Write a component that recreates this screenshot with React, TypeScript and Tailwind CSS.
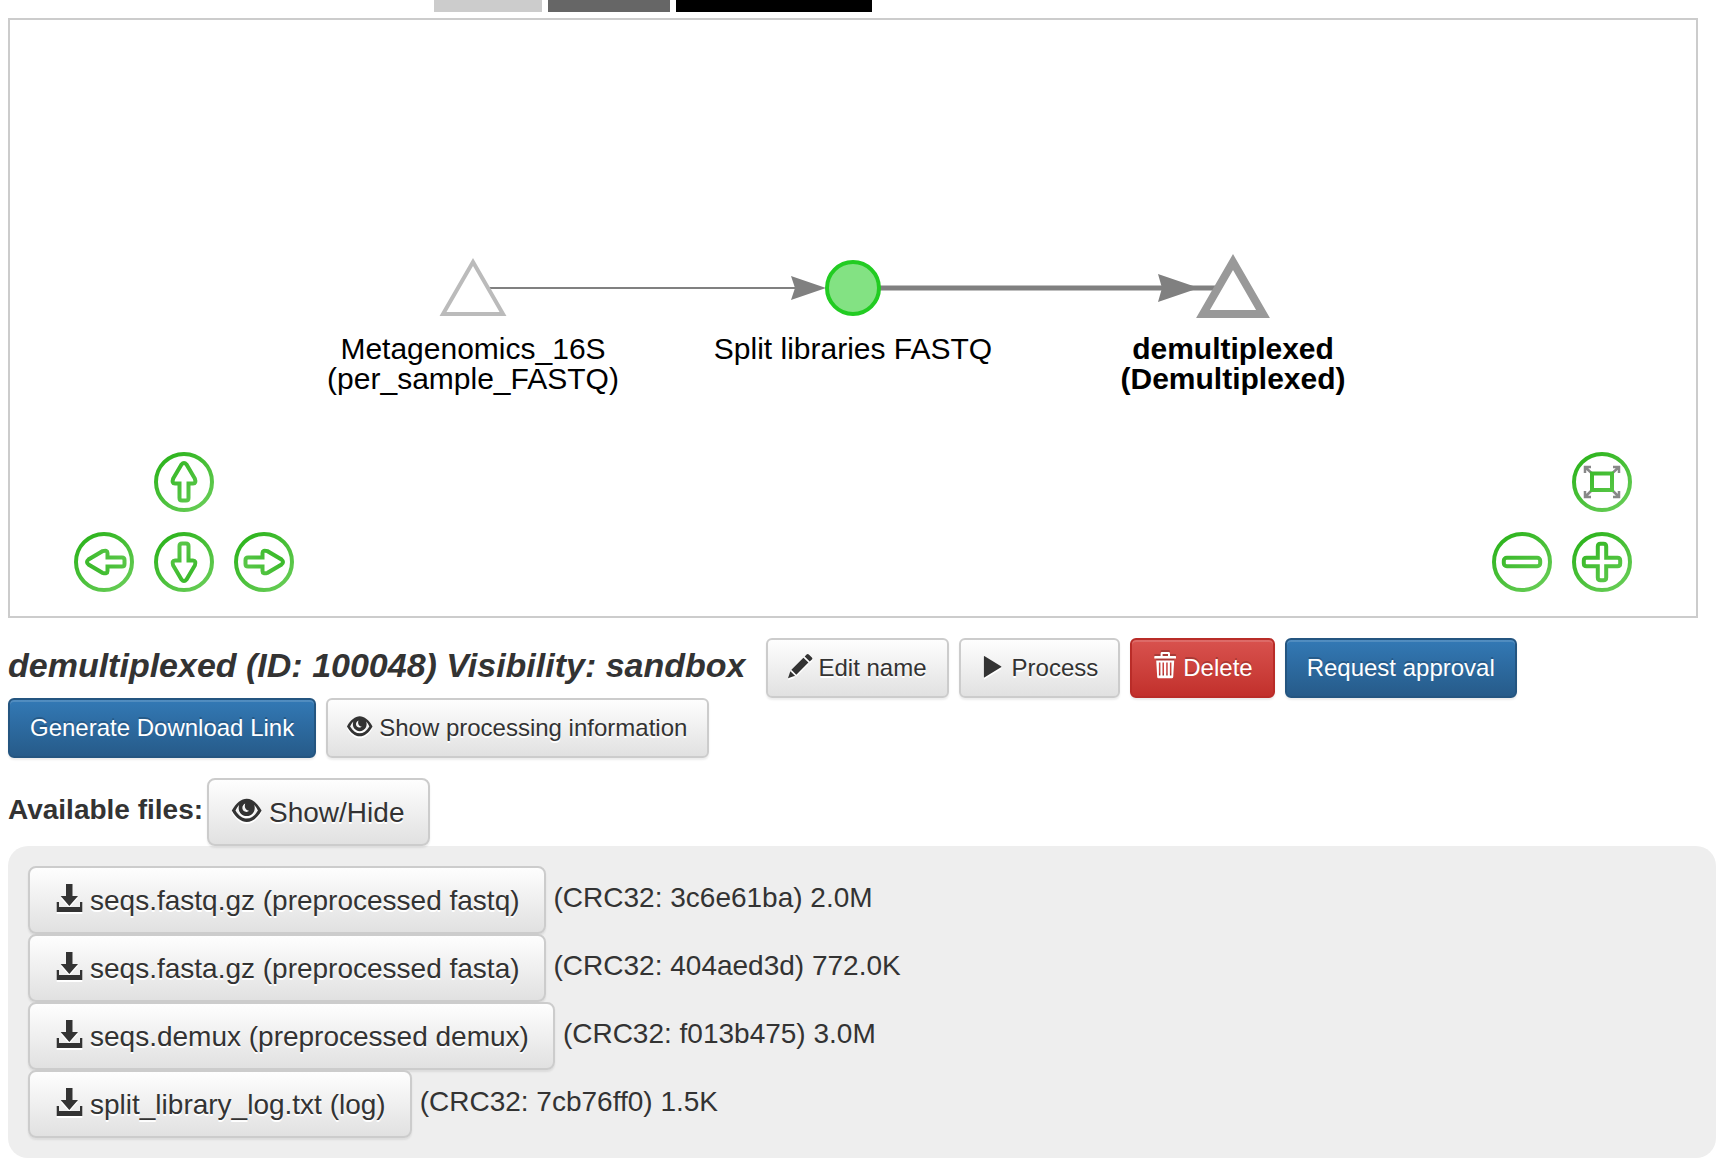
import type { ReactNode } from "react";

const GREEN = "url(#control-green)";

function Glyph({ size, shadow, box = 28, children }: { size: string; shadow: string; box?: number; children: ReactNode }) {
  return (
    <svg
      viewBox={`0 0 ${box} ${box}`}
      className={`${size} ${shadow} mb-1 shrink-0 overflow-visible`}
      fill="currentColor"
      aria-hidden="true"
    >
      {children}
    </svg>
  );
}

const LIGHT = "drop-shadow-[0_2px_0_#fff]";
const DARK = "drop-shadow-[0_-2px_0_rgba(0,0,0,0.2)]";

function Eye({ size }: { size: string }) {
  return (
    <Glyph size={size} shadow={LIGHT}>
      <path
        fillRule="evenodd"
        d="M-1.2 14.500C3 7 8.500 2.700 13.700 2.700S24.500 7 28.600 14.500C24.500 22 19 26 13.700 26S3 22 -1.200 14.500ZM6.200 8.800C4.700 10.500 3.500 12.400 2.500 14.500C5.700 20 9.500 22.600 13.700 22.600S21.700 20 24.900 14.500C23.900 12.400 22.700 10.500 21.200 8.800C23.200 14.500 19.500 20 13.700 20S4.200 14.500 6.200 8.800ZM12.200 7.600C8.700 9.500 8.300 14 11.900 15.600C13.400 16.200 15.200 15.800 15.900 14.700C12.900 14.500 10.900 11.500 12.200 7.600Z"
      />
    </Glyph>
  );
}

function Download() {
  return (
    <Glyph size="size-7" shadow={LIGHT}>
      <path d="M12 0H18.500V12H24L15.300 22L6.700 12H12ZM2.700 18H5V23H26V18H28.300V28H2.700Z" />
    </Glyph>
  );
}

function Pencil() {
  return (
    <Glyph size="size-6" shadow={LIGHT} box={24}>
      <path d="M0 24.300L2.300 17.200L7 21.800ZM3.400 15.700L15.400 3.700L20.400 8.600L8.300 20.700ZM16.700 2.400L18.600 .5Q19.700 -.6 20.800 .5L23.900 3.400Q25 4.500 23.900 5.600L21.700 7.400Z" />
    </Glyph>
  );
}

function Play() {
  return (
    <Glyph size="size-6" shadow={LIGHT} box={24}>
      <path d="M2.900 2.700Q2.900 1.800 3.700 2.300L20 12.200Q20.800 12.700 20 13.300L3.700 23.300Q2.900 23.800 2.900 22.900Z" />
    </Glyph>
  );
}

function Trash() {
  return (
    <Glyph size="size-6" shadow={DARK} box={24}>
      <path
        fillRule="evenodd"
        d="M2.300 4.500V2.600Q2.300 2 3 2H8.600V-.6Q8.600 -2 10 -2H16.600Q18 -2 18 -.6V2H23.300Q24 2 24 2.600V4.500ZM10.600 0V2H16V0ZM4.200 6.500H22.200L21.200 23Q21.100 24.200 19.900 24.200H6.500Q5.300 24.200 5.200 23ZM6.900 8.500V21.500H8.400V8.500ZM10.500 8.500V21.500H12V8.500ZM14.200 8.500V21.500H15.700V8.500ZM17.900 8.500V21.500H19.400V8.500Z"
      />
    </Glyph>
  );
}

const BASE =
  "inline-flex cursor-pointer items-center whitespace-nowrap border-2 bg-linear-to-b bg-origin-border shadow-[inset_0_2px_0_rgba(255,255,255,0.15),0_2px_2px_rgba(0,0,0,0.075)]";
const TONES = {
  plain: "border-[#ccc] from-white to-[#e0e0e0] text-[#333] text-shadow-[0_2px_0_#fff]",
  primary: "border-[#245580] from-[#337ab7] to-[#265a88] text-white text-shadow-[0_-2px_0_rgba(0,0,0,0.2)]",
  danger: "border-[#b92c28] from-[#d9534f] to-[#c12e2a] text-white text-shadow-[0_-2px_0_rgba(0,0,0,0.2)]",
};
const SIZES = {
  sm: "h-15 gap-[7px] rounded-md px-5 text-[24px]",
  md: "h-17 gap-2 rounded-lg px-6 text-[28px] [&>span]:pt-0.5",
};

function Button({
  tone = "plain",
  size = "sm",
  icon,
  children,
}: {
  tone?: keyof typeof TONES;
  size?: keyof typeof SIZES;
  icon?: ReactNode;
  children: ReactNode;
}) {
  return (
    <button type="button" className={`${BASE} ${TONES[tone]} ${SIZES[size]}`}>
      {icon}
      <span>{children}</span>
    </button>
  );
}

const ARROW =
  "M27.500 12.500Q30 9.500 32.500 12.500L40.800 26.500Q42.500 31.500 39 31.500H34.500V46Q34.500 48.500 32 48.500H28Q25.500 48.500 25.500 46V31.500H21Q17.500 31.500 19.200 26.500Z";

function Control({ label, className = "", children }: { label: string; className?: string; children: ReactNode }) {
  return (
    <button type="button" aria-label={label} className={`size-15 cursor-pointer rounded-full ${className}`}>
      <svg viewBox="0 0 60 60" className="size-15" fill="none" stroke={GREEN} strokeWidth="4" aria-hidden="true">
        <circle cx="30" cy="30" r="28" />
        {children}
      </svg>
    </button>
  );
}

function Workflow() {
  return (
    <svg
      viewBox="0 0 1686 596"
      className="h-[596px] w-full font-['Liberation_Sans',Arial,sans-serif] text-[30px]"
      role="img"
      aria-label="Processing workflow"
    >
      <defs>
        <linearGradient id="control-green" gradientUnits="userSpaceOnUse" x1="12" y1="6" x2="50" y2="56">
          <stop offset="0" stopColor="#2fb51f" />
          <stop offset="1" stopColor="#66cc55" />
        </linearGradient>
      </defs>
      <g transform="translate(843 268)">
        <path d="M-365 0H-55" stroke="#808080" strokeWidth="2" />
        <path d="M-62 -12L-27 0L-62 12L-58 0Z" fill="#808080" />
        <path d="M26 0H368" stroke="#808080" strokeWidth="5" />
        <path d="M305 -14L346 0L305 14L309 0Z" fill="#808080" />
        <path d="M-380 -26L-350 26H-410Z" fill="#fff" stroke="#bbb" strokeWidth="4" />
        <circle r="26" fill="#83e283" stroke="#22cc22" strokeWidth="4" />
        <path d="M380 -26L410 26H350Z" fill="#fff" stroke="#999" strokeWidth="8" />
        <g textAnchor="middle" fill="#000">
          <text x="-380" y="71">Metagenomics_16S</text>
          <text x="-380" y="101">(per_sample_FASTQ)</text>
          <text x="0" y="71">Split libraries FASTQ</text>
          <g fontWeight="700">
            <text x="380" y="71">demultiplexed</text>
            <text x="380" y="101">(Demultiplexed)</text>
          </g>
        </g>
      </g>
    </svg>
  );
}

const FILES = [
  { name: "seqs.fastq.gz (preprocessed fastq)", info: "(CRC32: 3c6e61ba) 2.0M" },
  { name: "seqs.fasta.gz (preprocessed fasta)", info: "(CRC32: 404aed3d) 772.0K" },
  { name: "seqs.demux (preprocessed demux)", info: "(CRC32: f013b475) 3.0M" },
  { name: "split_library_log.txt (log)", info: "(CRC32: 7cb76ff0) 1.5K" },
];

export default function App() {
  return (
    <main className="bg-white pr-1 pl-2 font-['Liberation_Sans',Arial,sans-serif] text-[28px] text-[#333]">
      <div className="flex h-3 gap-1.5 pl-[426px]">
        <div className="w-[108px] bg-[#ccc]" />
        <div className="w-[122px] bg-[#666]" />
        <div className="w-[196px] bg-black" />
      </div>

      <section className="relative mt-1.5 mr-[18px] border-2 border-[#ccc]">
        <Workflow />
        <div className="absolute bottom-6 left-16 grid grid-cols-3 gap-5">
          <Control label="Pan up" className="col-start-2">
            <path d={ARROW} />
          </Control>
          <Control label="Pan left" className="col-start-1">
            <path d={ARROW} transform="translate(2 0) rotate(-90 30 30)" />
          </Control>
          <Control label="Pan down">
            <path d={ARROW} transform="rotate(180 30 30)" />
          </Control>
          <Control label="Pan right">
            <path d={ARROW} transform="rotate(90 30 30)" />
          </Control>
        </div>
        <div className="absolute right-16 bottom-6 grid grid-cols-2 gap-5">
          <Control label="Fit to view" className="col-start-2">
            <path
              d="M20 21.500L13 15M13 21V15H19M40 21.500L47 15M41 15H47V21M20 38L13 45M13 39V45H19M40 38L47 45M41 45H47V39"
              stroke="#888"
              strokeWidth="2.500"
            />
            <rect x="20" y="21.500" width="20" height="16.500" />
          </Control>
          <Control label="Zoom out" className="col-start-1">
            <rect x="11.800" y="25.800" width="36.400" height="8.400" rx="3" />
          </Control>
          <Control label="Zoom in">
            <path d="M25.800 25.800V14.500Q25.800 11.800 28.500 11.800H31.500Q34.200 11.800 34.200 14.500V25.800H45.500Q48.200 25.800 48.200 28.500V31.500Q48.200 34.200 45.500 34.200H34.200V45.500Q34.200 48.200 31.500 48.200H28.500Q25.800 48.200 25.800 45.500V34.200H14.500Q11.800 34.200 11.800 31.500V28.500Q11.800 25.800 14.500 25.800Z" />
          </Control>
        </div>
      </section>

      <div className="mt-5 flex flex-wrap items-center gap-x-2.5">
        <h4 className="mr-2.5 pb-1.5 text-[34px] leading-10 font-bold italic">
          demultiplexed (ID: 100048) Visibility: sandbox
        </h4>
        <Button icon={<Pencil />}>Edit name</Button>
        <Button icon={<Play />}>Process</Button>
        <Button tone="danger" icon={<Trash />}>
          Delete
        </Button>
        <Button tone="primary">Request approval</Button>
        <Button tone="primary">Generate Download Link</Button>
        <Button icon={<Eye size="size-6" />}>Show processing information</Button>
      </div>

      <div className="mt-5 flex items-center gap-1">
        <b className="pb-1">Available files:</b>
        <Button size="md" icon={<Eye size="size-7" />}>
          Show/Hide
        </Button>
      </div>

      <ul className="rounded-[20px] bg-[#eee] p-5">
        {FILES.map((file) => (
          <li key={file.name} className="flex items-center gap-2">
            <Button size="md" icon={<Download />}>
              {file.name}
            </Button>
            <span className="pb-1">{file.info}</span>
          </li>
        ))}
      </ul>
    </main>
  );
}
